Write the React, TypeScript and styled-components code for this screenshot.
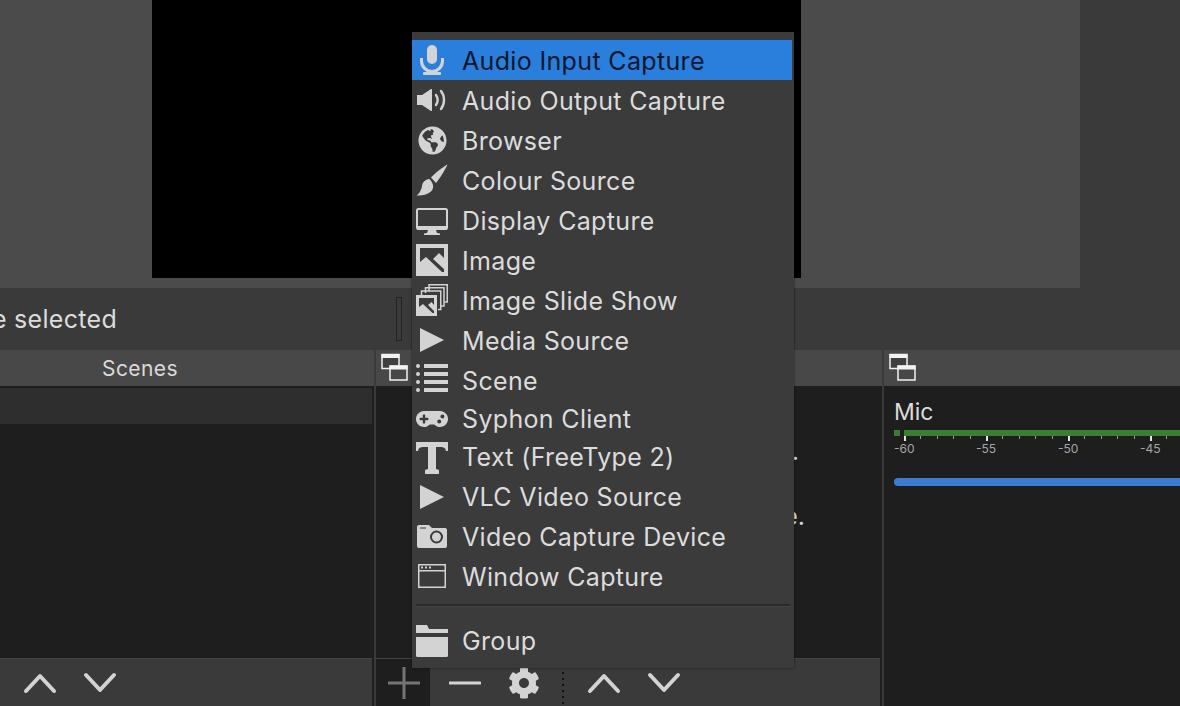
import React, { ReactNode } from 'react';
import styled, { createGlobalStyle } from 'styled-components';
import { FaCog, FaGamepad, FaGlobeAmericas } from 'react-icons/fa';

const GlobalStyle = createGlobalStyle`
    html, body {
        margin: 0;
        padding: 0;
        width: 1180px;
        height: 706px;
        overflow: hidden;
        background: #3a3a3a;
    }
    body {
        font-family: Inter, "Liberation Sans", sans-serif;
    }
`;

const ICON = '#d3d3d3';
const MENU_BG = '#3b3b3b';

const Page = styled.div`
    position: relative;
    width: 1180px;
    height: 706px;
    overflow: hidden;
    display: flex;
    flex-direction: column;
    background: #3a3a3a;
`;

const PreviewArea = styled.div`
    height: 288px;
    width: 1080px;
    flex: none;
    box-sizing: border-box;
    padding: 0 279px 10px 152px;
    background: #4b4b4b;
`;

const Canvas = styled.div`
    height: 100%;
    background: #000;
`;

const ContextBar = styled.div`
    height: 62px;
    flex: none;
    display: flex;
    align-items: center;
    background: #3a3a3a;
`;

const ContextClip = styled.div`
    width: 117px;
    overflow: hidden;
    display: flex;
    justify-content: flex-end;
    white-space: nowrap;
    font-size: 25px;
    letter-spacing: 0.3px;
    color: #dcdcdc;
`;

const ContextDivider = styled.div`
    width: 6px;
    height: 44px;
    box-sizing: border-box;
    margin-left: 279px;
    border: 1px solid #232323;
`;

const Docks = styled.div`
    flex: 1;
    display: flex;
    min-height: 0;
`;

const Dock = styled.section<{ $width: number }>`
    width: ${(p) => p.$width}px;
    flex: none;
    display: flex;
    flex-direction: column;
    background: #1e1e1e;
`;

const DockHeader = styled.header<{ $title?: boolean }>`
    height: 36px;
    flex: none;
    box-sizing: border-box;
    display: flex;
    align-items: center;
    justify-content: ${(p) => (p.$title ? 'center' : 'flex-start')};
    padding: ${(p) => (p.$title ? '0 94px 0 0' : '0 0 0 4px')};
    background: #484848;
    color: #dadada;
    font-size: 21px;
    letter-spacing: 0.4px;
`;

const DockBody = styled.div<{ $gutter?: number }>`
    flex: 1;
    min-height: 0;
    margin-right: ${(p) => p.$gutter || 0}px;
    display: flex;
    flex-direction: column;
    background: #1e1e1e;
`;

const VerticalLine = styled.div`
    width: 2px;
    flex: none;
    background: #3a3a3a;
`;

const SceneItem = styled.div`
    height: 36px;
    flex: none;
    margin-top: 2px;
    background: #2e2e2e;
`;

const HintText = styled.div`
    flex: 1;
    display: flex;
    flex-direction: column;
    align-items: flex-end;
    gap: 40px;
    padding: 53px 77px 0 0;
    color: #d8d8d8;
    font-size: 25px;
    line-height: 1;
`;

const HintLine = styled.span<{ $inset?: number }>`
    margin-right: ${(p) => p.$inset || 0}px;
`;

const Toolbar = styled.div<{ $gutter?: number }>`
    height: 48px;
    flex: none;
    box-sizing: border-box;
    margin-right: ${(p) => p.$gutter || 0}px;
    display: flex;
    align-items: stretch;
    background: #3a3a3a;
    border-top: 1px solid #444;
`;

const ToolButton = styled.div<{ $width: number; $pressed?: boolean }>`
    width: ${(p) => p.$width}px;
    flex: none;
    box-sizing: border-box;
    display: flex;
    align-items: center;
    justify-content: center;
    padding-left: ${(p) => (p.$pressed ? 2 : 0)}px;
    background: ${(p) => (p.$pressed ? '#1e1e1e' : 'transparent')};
`;

const DottedSeparator = styled.div`
    width: 2px;
    height: 34px;
    flex: none;
    align-self: flex-end;
    margin: 0 22px 0 0;
    background: repeating-linear-gradient(180deg, #111 0 2px, transparent 2px 6px);
`;

const MixerBody = styled.div`
    flex: 1;
    padding: 13px 0 0 10px;
    background: #1e1e1e;
    overflow: hidden;
`;

const ChannelName = styled.div`
    color: #dcdcdc;
    font-size: 23px;
    line-height: 26px;
`;

const Meter = styled.div`
    display: flex;
    gap: 4px;
    margin-top: 5px;
    height: 6px;
`;

const MeterCap = styled.div`
    width: 6px;
    flex: none;
    background: #3a7d33;
`;

const MeterBar = styled.div`
    flex: 1;
    background: #3a7d33;
`;

const MeterTicks = styled.div`
    height: 5px;
    margin-left: 10px;
    background:
        repeating-linear-gradient(90deg, #e4e4e4 0 2px, transparent 2px 82px) 0 0 / 100% 5px no-repeat,
        repeating-linear-gradient(90deg, #999 0 1px, transparent 1px 16.4px) 0 0 / 100% 3px no-repeat;
`;

const MeterScale = styled.div`
    display: flex;
    margin-top: 1px;
`;

const ScaleLabel = styled.span`
    width: 82px;
    flex: none;
    color: #a6a6a6;
    font-size: 12px;
    line-height: 14px;
`;

const VolumeSlider = styled.div`
    height: 8px;
    margin-top: 22px;
    border-radius: 4px 0 0 4px;
    background: #3d7cd0;
`;

const Menu = styled.nav`
    position: absolute;
    left: 412px;
    top: 32px;
    width: 382px;
    height: 636px;
    box-sizing: border-box;
    padding: 8px 2px 0 0;
    background: ${MENU_BG};
    box-shadow: 0 0 2px rgba(0, 0, 0, 0.6);
    font-size: 25px;
    letter-spacing: 0.34px;
`;

const MenuRow = styled.div<{ $height?: number; $active?: boolean }>`
    height: ${(p) => p.$height || 40}px;
    display: flex;
    align-items: center;
    padding-left: 4px;
    background: ${(p) => (p.$active ? '#2b7fdc' : 'transparent')};
    color: ${(p) => (p.$active ? '#07162d' : '#dcdcdc')};
    white-space: nowrap;
`;

const MenuIcon = styled.span`
    width: 32px;
    height: 32px;
    flex: none;
    display: flex;
    align-items: center;
    justify-content: center;
    margin-right: 14px;
    color: ${ICON};
`;

const MenuLabel = styled.span<{ $low?: boolean; $high?: boolean }>`
    padding-top: ${(p) => (p.$low ? 2 : 0)}px;
    padding-bottom: ${(p) => (p.$high ? 2 : 0)}px;
`;

const MenuSeparator = styled.div`
    height: 2px;
    margin: 7px 2px 15px 4px;
    background: #2a2a2a;
    box-shadow: 0 1px 0 #444;
`;

const Svg = ({ children }: { children: ReactNode }) => (
    <svg width="32" height="32" viewBox="0 0 32 32">
        {children}
    </svg>
);

const MicIcon = () => (
    <Svg>
        <rect x="11" y="1" width="10" height="19" rx="5" fill={ICON} />
        <path d="M5.5 14v3a10.5 10.5 0 0 0 21 0v-3" fill="none" stroke={ICON} strokeWidth="3" />
        <rect x="14.5" y="26" width="3" height="4" fill={ICON} />
        <rect x="7" y="28" width="18" height="3" rx="1" fill={ICON} />
    </Svg>
);

const SpeakerIcon = () => (
    <Svg>
        <path d="M1 11h5l9-6c1 0 1 .5 1 1v20c0 .5 0 1-1 1l-9-6H1z" fill={ICON} />
        <path d="M20 11c2 3 2 7 0 10" fill="none" stroke={ICON} strokeWidth="2.4" strokeLinecap="round" />
        <path d="M25 7c4 5 4 13 0 18" fill="none" stroke={ICON} strokeWidth="2.4" strokeLinecap="round" />
    </Svg>
);

const BrushIcon = () => (
    <Svg>
        <path d="M31.500 .5C27 3 19 9 15 13.500L20 19C24 14 29 6 31.500 .5Z" fill={ICON} />
        <path
            d="M13.500 15C9 15.500 6.500 18 6 22C5.500 26 3 30 .5 31.500C6 32 12 30.500 15.500 27C18 24 18 20 13.500 15Z"
            fill={ICON}
        />
    </Svg>
);

const MonitorIcon = () => (
    <Svg>
        <rect x="1" y="5" width="30" height="20" rx="1.5" fill="none" stroke={ICON} strokeWidth="2" />
        <path d="M1 22h30v2.5a1.5 1.5 0 0 1-1.5 1.5h-27A1.5 1.5 0 0 1 1 24.500z" fill={ICON} />
        <path d="M12 26h8l1 3 3 .5V31H8v-1.500l3-.5z" fill={ICON} />
    </Svg>
);

const ImageIcon = () => (
    <Svg>
        <rect width="32" height="32" fill={ICON} />
        <path d="M4 4H28V14L23 9 17 15 28 25V28H26L10 13 4 18Z" fill={MENU_BG} />
    </Svg>
);

const SlideShowIcon = () => (
    <Svg>
        <path d="M13 7V.75H31.250V18H28.500" fill="none" stroke={ICON} strokeWidth="1.500" />
        <path d="M9.500 9V3.750H28V22H25" fill="none" stroke={ICON} strokeWidth="1.500" />
        <path d="M5.500 11V7H24.750V25.500H22" fill="none" stroke={ICON} strokeWidth="1.500" />
        <rect y="11" width="21" height="21" fill={ICON} />
        <path d="M3 14H18V21L15.500 18 12 21 18 27V29H16.500L7 20 3 23Z" fill={MENU_BG} />
    </Svg>
);

const PlayIcon = () => (
    <Svg>
        <path d="M4 4L28 16 4 28Z" fill={ICON} />
    </Svg>
);

const ListIcon = () => (
    <Svg>
        {[2, 10, 18, 26].map((y) => (
            <g key={y}>
                <circle cx="2" cy={y} r="2" fill={ICON} />
                <rect x="8" y={y - 2} width="24" height="4" fill={ICON} />
            </g>
        ))}
    </Svg>
);

const TextIcon = () => (
    <Svg>
        <path
            d="M0 0H32V9H30C29.500 6 28 5 25 5H20V27L23 28V32H9V28L12 27V5H7C4 5 2.500 6 2 9H0Z"
            fill={ICON}
        />
    </Svg>
);

const CameraIcon = () => (
    <Svg>
        <path
            d="M1 6Q1 4 3 4H13L16 7H29Q31 7 31 9V25Q31 27 29 27H3Q1 27 1 25Z"
            fill={ICON}
        />
        <rect x="4" y="6.500" width="6" height="1" fill={MENU_BG} />
        <circle cx="20.500" cy="16" r="5.500" fill="none" stroke={MENU_BG} strokeWidth="2" />
    </Svg>
);

const WindowIcon = () => (
    <Svg>
        <rect x="2.750" y="3.750" width="26.500" height="22.500" fill="none" stroke={ICON} strokeWidth="1.500" />
        <rect x="2" y="9" width="28" height="1.500" fill={ICON} />
        <rect x="5" y="5.500" width="2" height="2" fill={ICON} />
        <rect x="9" y="5.500" width="2" height="2" fill={ICON} />
        <rect x="13" y="5.500" width="2" height="2" fill={ICON} />
    </Svg>
);

const FolderIcon = () => (
    <Svg>
        <path d="M0 0H11L13 4H32V8H0Z" fill={ICON} />
        <path d="M0 12H32V30.500A1.500 1.500 0 0 1 30.500 32H1.500A1.500 1.500 0 0 1 0 30.500Z" fill={ICON} />
    </Svg>
);

const FloatIcon = () => (
    <svg width="30" height="30" viewBox="0 0 30 30">
        <rect x="2" y="1.500" width="17" height="14" fill="#3f3f3f" stroke="#f2f2f2" strokeWidth="1.500" />
        <rect x="1.500" y="1" width="18" height="4" fill="#f2f2f2" />
        <rect x="10" y="13" width="17" height="14" fill="#484848" stroke="#f2f2f2" strokeWidth="1.500" />
        <rect x="9.500" y="12.500" width="18" height="4" fill="#f2f2f2" />
    </svg>
);

const ChevronIcon = ({ down }: { down?: boolean }) => (
    <svg width="36" height="24" viewBox="0 0 36 24">
        <path
            d={down ? 'M4 4L18 19 32 4' : 'M4 20L18 5 32 20'}
            fill="none"
            stroke={ICON}
            strokeWidth="4"
            strokeLinecap="round"
            strokeLinejoin="round"
        />
    </svg>
);

const PlusIcon = () => (
    <svg width="32" height="32" viewBox="0 0 32 32">
        <path d="M0 16H32M16 0V32" fill="none" stroke="#757575" strokeWidth="3" strokeLinecap="round" />
    </svg>
);

const MinusIcon = () => (
    <svg width="32" height="32" viewBox="0 0 32 32">
        <path d="M1 16H31" fill="none" stroke={ICON} strokeWidth="3" strokeLinecap="round" />
    </svg>
);

const sources: { label: string; icon: ReactNode; height?: number; active?: boolean; low?: boolean; high?: boolean }[] = [
    { label: 'Audio Input Capture', icon: <MicIcon />, active: true, low: true },
    { label: 'Audio Output Capture', icon: <SpeakerIcon />, low: true },
    { label: 'Browser', icon: <FaGlobeAmericas size={29} />, low: true },
    { label: 'Colour Source', icon: <BrushIcon />, low: true },
    { label: 'Display Capture', icon: <MonitorIcon />, low: true },
    { label: 'Image', icon: <ImageIcon />, low: true },
    { label: 'Image Slide Show', icon: <SlideShowIcon />, low: true },
    { label: 'Media Source', icon: <PlayIcon />, low: true },
    { label: 'Scene', icon: <ListIcon />, low: true },
    { label: 'Syphon Client', icon: <FaGamepad size={32} />, height: 38 },
    { label: 'Text (FreeType 2)', icon: <TextIcon />, height: 39, high: true },
    { label: 'VLC Video Source', icon: <PlayIcon /> },
    { label: 'Video Capture Device', icon: <CameraIcon /> },
    { label: 'Window Capture', icon: <WindowIcon /> },
];

const App = () => (
    <Page>
        <GlobalStyle />
        <PreviewArea>
            <Canvas />
        </PreviewArea>
        <ContextBar>
            <ContextClip>No source selected</ContextClip>
            <ContextDivider />
        </ContextBar>
        <Docks>
            <Dock $width={374}>
                <DockHeader $title>Scenes</DockHeader>
                <DockBody $gutter={2}>
                    <SceneItem />
                </DockBody>
                <Toolbar $gutter={2}>
                    <ToolButton $width={80}>
                        <ChevronIcon />
                    </ToolButton>
                    <ToolButton $width={40}>
                        <ChevronIcon down />
                    </ToolButton>
                </Toolbar>
            </Dock>
            <VerticalLine />
            <Dock $width={506}>
                <DockHeader>
                    <FloatIcon />
                </DockHeader>
                <HintText>
                    <HintLine $inset={6}>.</HintLine>
                    <HintLine>e.</HintLine>
                </HintText>
                <Toolbar $gutter={2}>
                    <ToolButton $width={54} $pressed>
                        <PlusIcon />
                    </ToolButton>
                    <ToolButton $width={70}>
                        <MinusIcon />
                    </ToolButton>
                    <ToolButton $width={48}>
                        <FaCog size={32} color={ICON} />
                    </ToolButton>
                    <ToolButton $width={14} />
                    <DottedSeparator />
                    <ToolButton $width={36}>
                        <ChevronIcon />
                    </ToolButton>
                    <ToolButton $width={84}>
                        <ChevronIcon down />
                    </ToolButton>
                </Toolbar>
            </Dock>
            <VerticalLine />
            <Dock $width={296}>
                <DockHeader>
                    <FloatIcon />
                </DockHeader>
                <MixerBody>
                    <ChannelName>Mic</ChannelName>
                    <Meter>
                        <MeterCap />
                        <MeterBar />
                    </Meter>
                    <MeterTicks />
                    <MeterScale>
                        <ScaleLabel>-60</ScaleLabel>
                        <ScaleLabel>-55</ScaleLabel>
                        <ScaleLabel>-50</ScaleLabel>
                        <ScaleLabel>-45</ScaleLabel>
                    </MeterScale>
                    <VolumeSlider />
                </MixerBody>
            </Dock>
        </Docks>
        <Menu>
            {sources.map((s) => (
                <MenuRow key={s.label} $height={s.height} $active={s.active}>
                    <MenuIcon>{s.icon}</MenuIcon>
                    <MenuLabel $low={s.low} $high={s.high}>
                        {s.label}
                    </MenuLabel>
                </MenuRow>
            ))}
            <MenuSeparator />
            <MenuRow>
                <MenuIcon>
                    <FolderIcon />
                </MenuIcon>
                <MenuLabel>Group</MenuLabel>
            </MenuRow>
        </Menu>
    </Page>
);

export default App;
